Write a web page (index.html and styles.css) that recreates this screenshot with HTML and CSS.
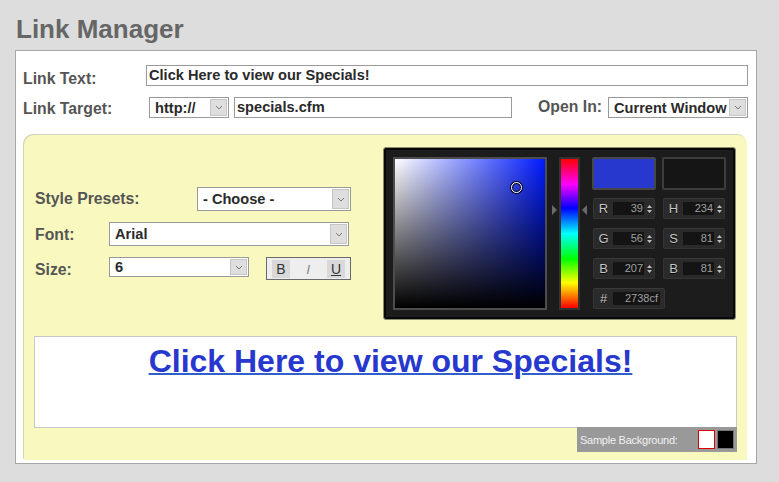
FILE: index.html
```html
<!DOCTYPE html>
<html>
<head>
<meta charset="utf-8">
<title>Link Manager</title>
<link rel="stylesheet" href="styles.css">
</head>
<body>
<h1 class="title">Link Manager</h1>
<div class="panel">
  <div class="row row-text">
    <label class="lbl lbl-text">Link Text:</label>
    <div class="field field-text">Click Here to view our Specials!</div>
  </div>
  <div class="row row-target">
    <label class="lbl lbl-target">Link Target:</label>
    <div class="sel sel-proto"><span class="sel-val">http://</span><span class="sel-btn"><svg width="8" height="5" viewBox="0 0 8 5"><path d="M1 1l3 3 3-3" fill="none" stroke="#777" stroke-width="1"/></svg></span></div>
    <div class="field field-url">specials.cfm</div>
    <label class="lbl lbl-open">Open In:</label>
    <div class="sel sel-open"><span class="sel-val">Current Window</span><span class="sel-btn"><svg width="8" height="5" viewBox="0 0 8 5"><path d="M1 1l3 3 3-3" fill="none" stroke="#777" stroke-width="1"/></svg></span></div>
  </div>

  <div class="style-box">
    <div class="style-top">
      <div class="style-form">
        <div class="srow srow-preset">
          <label class="slbl slbl-preset">Style Presets:</label>
          <div class="sel sel-preset"><span class="sel-val">- Choose -</span><span class="sel-btn"><svg width="8" height="5" viewBox="0 0 8 5"><path d="M1 1l3 3 3-3" fill="none" stroke="#777" stroke-width="1"/></svg></span></div>
        </div>
        <div class="srow srow-font">
          <label class="slbl slbl-font">Font:</label>
          <div class="sel sel-font"><span class="sel-val">Arial</span><span class="sel-btn"><svg width="8" height="5" viewBox="0 0 8 5"><path d="M1 1l3 3 3-3" fill="none" stroke="#777" stroke-width="1"/></svg></span></div>
        </div>
        <div class="srow srow-size">
          <label class="slbl slbl-size">Size:</label>
          <div class="sel sel-size"><span class="sel-val">6</span><span class="sel-btn"><svg width="8" height="5" viewBox="0 0 8 5"><path d="M1 1l3 3 3-3" fill="none" stroke="#777" stroke-width="1"/></svg></span></div>
          <div class="biu">
            <span class="biu-btn biu-b on">B</span>
            <span class="biu-btn biu-i">I</span>
            <span class="biu-btn biu-u on">U</span>
          </div>
        </div>
      </div>

      <div class="picker">
        <div class="sv"><span class="sv-marker"></span></div>
        <div class="hue-wrap">
          <span class="hue-arrow hue-arrow-l"></span>
          <div class="hue"></div>
          <span class="hue-arrow hue-arrow-r"></span>
        </div>
        <div class="cp-right">
          <div class="swatch sw-new"></div>
          <div class="swatch sw-old"></div>
          <div class="cf"><span class="cf-l">R</span><span class="cf-v">39</span><svg class="cf-s" width="5" height="8" viewBox="0 0 5 8"><path d="M2.5 0L5 3H0z M2.5 8L5 5H0z" fill="#bdbdbd"/></svg></div>
          <div class="cf"><span class="cf-l">H</span><span class="cf-v">234</span><svg class="cf-s" width="5" height="8" viewBox="0 0 5 8"><path d="M2.5 0L5 3H0z M2.5 8L5 5H0z" fill="#bdbdbd"/></svg></div>
          <div class="cf"><span class="cf-l">G</span><span class="cf-v">56</span><svg class="cf-s" width="5" height="8" viewBox="0 0 5 8"><path d="M2.5 0L5 3H0z M2.5 8L5 5H0z" fill="#bdbdbd"/></svg></div>
          <div class="cf"><span class="cf-l">S</span><span class="cf-v">81</span><svg class="cf-s" width="5" height="8" viewBox="0 0 5 8"><path d="M2.5 0L5 3H0z M2.5 8L5 5H0z" fill="#bdbdbd"/></svg></div>
          <div class="cf"><span class="cf-l">B</span><span class="cf-v">207</span><svg class="cf-s" width="5" height="8" viewBox="0 0 5 8"><path d="M2.5 0L5 3H0z M2.5 8L5 5H0z" fill="#bdbdbd"/></svg></div>
          <div class="cf"><span class="cf-l">B</span><span class="cf-v">81</span><svg class="cf-s" width="5" height="8" viewBox="0 0 5 8"><path d="M2.5 0L5 3H0z M2.5 8L5 5H0z" fill="#bdbdbd"/></svg></div>
          <div class="cf cf-hex"><span class="cf-l">#</span><span class="cf-v">2738cf</span></div>
        </div>
      </div>
    </div>

    <div class="preview"><a class="preview-link">Click Here to view our Specials!</a></div>
    <div class="sample-bar">
      <span class="sample-text">Sample Background:</span>
      <span class="sample-sw sample-white"></span>
      <span class="sample-sw sample-black"></span>
    </div>
  </div>
</div>
</body>
</html>
```

FILE: styles.css
```css
* { box-sizing: border-box; }

body {
  margin: 0;
  width: 779px;
  height: 482px;
  overflow: hidden;
  background: #dddddd;
  font-family: "Liberation Sans", Arial, sans-serif;
}

.title {
  margin: 0;
  height: 50px;
  padding: 14px 0 0 16px;
  font-size: 26px;
  line-height: 30px;
  font-weight: bold;
  color: #666666;
}

.panel {
  margin-left: 15px;
  width: 742px;
  height: 414px;
  border: 1px solid #a6a6a6;
  background: #ffffff;
  padding: 14px 8px 3px 7px;
}

.row { display: flex; height: 21px; }
.row-text { margin-bottom: 11px; }
.row-target { margin-bottom: 16px; }

.lbl, .slbl {
  font-size: 15.8px;
  font-weight: bold;
  color: #555555;
  line-height: 18px;
  white-space: nowrap;
}
.lbl-text { width: 123px; margin-top: 5px; }
.lbl-target { width: 126px; margin-top: 3px; }
.lbl-open { width: 70px; margin-left: 26px; margin-top: 1px; }

.field {
  border: 1px solid #9a9a9a;
  background: #ffffff;
  font-size: 14.6px;
  font-weight: bold;
  color: #2a2a2a;
  line-height: 19px;
  padding-left: 2px;
  white-space: nowrap;
}
.field-text { flex: 1; }
.field-url { width: 278px; margin-left: 5px; }

.sel {
  display: flex;
  border: 1px solid #999999;
  background: #ffffff;
  height: 100%;
}
.sel-val {
  flex: 1;
  padding-left: 5px;
  font-size: 14.6px;
  font-weight: bold;
  color: #2a2a2a;
  white-space: nowrap;
  display: flex;
  align-items: center;
}
.sel-btn {
  width: 17px;
  margin: 1px 1px 1px 0;
  background: #dedede;
  border: 1px solid #c6c6c6;
  display: flex;
  align-items: center;
  justify-content: center;
}
.sel-proto { width: 80px; }
.sel-open { width: 140px; }

/* yellow style box */
.style-box {
  width: 724px;
  height: 326px;
  background: #f9f8bf;
  border-radius: 10px 10px 0 3px;
  box-shadow: inset 1px 1px 0 #d3d3c3;
  padding: 13px 11px 0 11px;
}
.style-top {
  display: flex;
  justify-content: space-between;
  height: 173px;
  margin-bottom: 16px;
}
.style-form {
  padding-top: 40px;
  display: flex;
  flex-direction: column;
}
.srow { display: flex; align-items: flex-start; }
.srow-preset { height: 24px; margin-bottom: 11px; }
.srow-font { height: 24px; margin-bottom: 11px; }
.srow-size { height: 23px; }

.slbl { margin-left: 1px; }
.slbl-preset { width: 162px; margin-top: 3px; }
.slbl-font { width: 74px; margin-top: 4px; }
.slbl-size { width: 74px; margin-top: 4px; }

.sel-preset { width: 154px; height: 24px; }
.sel-font { width: 240px; height: 24px; }
.sel-size { width: 140px; height: 20px; }

.biu {
  width: 85px;
  height: 23px;
  margin-left: 17px;
  border: 1px solid #6a6a6a;
  background: #eeeeee;
  display: flex;
  justify-content: space-between;
  padding: 2px 5px;
}
.biu-btn {
  width: 18px;
  height: 18px;
  display: flex;
  align-items: center;
  justify-content: center;
  font-size: 14px;
  color: #333333;
}
.biu-btn.on { background: #d9d9d9; }
.biu-i { font-style: italic; color: #8a8a8a; font-family: "DejaVu Sans", sans-serif; font-size: 13px; }
.biu-u { text-decoration: underline; }

/* color picker */
.picker {
  width: 353px;
  height: 173px;
  border: 1px solid #8b8b6f;
  border-radius: 3px;
  background: #1c1c1c;
  box-shadow: inset 0 0 0 2px #080808;
  padding: 9px;
  display: flex;
}
.sv {
  position: relative;
  width: 154px;
  height: 153px;
  border: 2px solid #4d4d4d;
  background:
    linear-gradient(to top, #000000, rgba(0,0,0,0)),
    linear-gradient(to right, #ffffff, #001aff);
}
.sv-marker {
  position: absolute;
  left: 116px;
  top: 23px;
  width: 11px;
  height: 11px;
  border: 1.5px solid #ffffff;
  border-radius: 50%;
  box-shadow: 0 0 0 1px #000000, inset 0 0 0 1px #000000;
}
.hue-wrap {
  position: relative;
  margin-left: 12px;
  width: 21px;
  height: 153px;
}
.hue {
  width: 21px;
  height: 153px;
  border: 2px solid #333333;
  background: linear-gradient(to bottom, #ff0000, #ff00ff 17%, #0000ff 33%, #00ffff 50%, #00ff00 67%, #ffff00 83%, #ff0000);
}
.hue-arrow {
  position: absolute;
  top: 48px;
  width: 0;
  height: 0;
  border-top: 5px solid transparent;
  border-bottom: 5px solid transparent;
}
.hue-arrow-l { left: -7px; border-left: 5px solid #6a6a6a; }
.hue-arrow-r { left: 23px; border-right: 5px solid #6a6a6a; }

.cp-right {
  margin-left: 12px;
  display: grid;
  grid-template-columns: 64px 64px;
  grid-template-rows: 32px 21px 21px 21px 21px;
  column-gap: 6px;
  row-gap: 9px;
  align-content: start;
}
.swatch { border-radius: 2px; margin-bottom: -1px; }
.sw-new { background: #2738cf; border: 2px solid #474747; }
.sw-old { background: #151515; border: 2px solid #3d3d3d; }

.cf {
  margin: 0 1px;
  height: 21px;
  background: #2a2a2a;
  border: 1px solid #343434;
  border-top-color: #3a3a3a;
  border-radius: 2px;
  display: flex;
  align-items: center;
}
.cf-l {
  width: 19px;
  text-align: center;
  font-size: 13px;
  color: #c6c6c6;
  text-shadow: 0 1px 0 #000;
}
.cf-v {
  width: 31px;
  height: 13px;
  background: #141414;
  color: #a0a0a0;
  font-size: 11px;
  line-height: 13px;
  text-align: right;
  padding-right: 1px;
}
.cf-s { margin-left: 3px; }
.cf-hex { grid-column: 1 / 3; width: 72px; }
.cf-hex .cf-v { width: 47px; padding-right: 2px; }

/* preview */
.preview {
  height: 92px;
  margin-right: -1px;
  border: 1px solid #c8c8c8;
  background: #ffffff;
  text-align: center;
  padding: 6px 0 0 10px;
}
.preview-link {
  font-size: 32px;
  font-weight: bold;
  line-height: 37px;
  color: #2738cf;
  text-decoration: underline;
  text-decoration-color: #2f5fcc;
  text-decoration-thickness: 1.5px;
  text-underline-offset: 1px;
  white-space: nowrap;
}

.sample-bar {
  width: 160px;
  height: 25px;
  margin-left: auto;
  margin-right: -1px;
  margin-top: -1px;
  background: #999999;
  display: flex;
  align-items: center;
  padding: 0 3px;
}
.sample-text {
  font-size: 11px;
  letter-spacing: -0.25px;
  color: #f2f2f2;
  white-space: nowrap;
}
.sample-sw { width: 17px; height: 19px; }
.sample-white { margin-left: auto; background: #ffffff; border: 1px solid #e00000; }
.sample-black { margin-left: 2px; background: #000000; border: 1px solid #777777; }
```
